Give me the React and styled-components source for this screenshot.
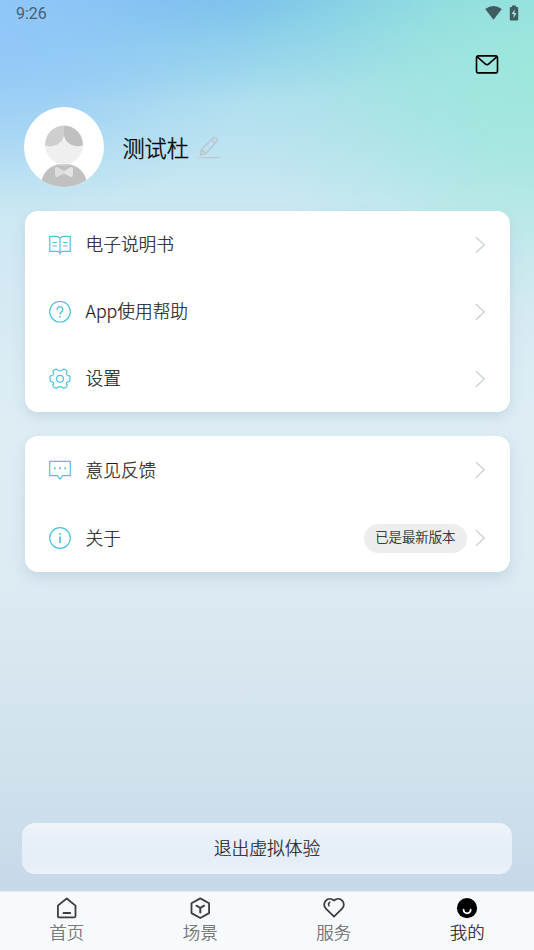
import React from 'react';
import styled, { createGlobalStyle } from 'styled-components';

const GlobalStyle = createGlobalStyle`
    * {
        box-sizing: border-box;
    }

    body {
        margin: 0;
        font-family: 'Noto Sans CJK SC', sans-serif;
        font-weight: 300;
        -webkit-text-stroke: 0.2px currentColor;
    }
`;

const Screen = styled.div`
    display: flex;
    flex-direction: column;
    height: 950px;
    overflow: hidden;
    background:
        radial-gradient(
            ellipse 270px 190px at 0 30px,
            rgba(146, 198, 250, 0.95),
            rgba(146, 198, 250, 0.6) 40%,
            rgba(146, 198, 250, 0.18) 75%,
            rgba(146, 198, 250, 0) 100%
        ),
        radial-gradient(
            ellipse 300px 250px at 540px 70px,
            rgba(156, 232, 218, 0.9),
            rgba(156, 232, 218, 0.6) 40%,
            rgba(156, 232, 218, 0.18) 75%,
            rgba(156, 232, 218, 0) 100%
        ),
        radial-gradient(
            ellipse 400px 120px at 150px -15px,
            rgba(122, 184, 240, 0.9),
            rgba(122, 190, 238, 0.35) 50%,
            rgba(122, 196, 236, 0) 100%
        ),
        linear-gradient(
            180deg,
            #83d2e4 0,
            #9bd9ea 45px,
            #aedfee 95px,
            #bde3f1 150px,
            #cbe8f2 205px,
            #d4e9f3 290px,
            #deedf4 420px,
            #dceaf2 590px,
            #d1e2ed 760px,
            #c7d9e9 890px
        );
`;

const StatusBar = styled.div`
    display: flex;
    justify-content: space-between;
    align-items: center;
    height: 27px;
    padding: 0 15px 0 16px;
    color: #44616f;
    font-family: Roboto, sans-serif;
    font-size: 16px;
    font-weight: 400;
    -webkit-text-stroke-width: 0;
`;

const StatusIcons = styled.div`
    display: flex;
    align-items: center;
    gap: 7px;
    margin: -2px 0 0;
`;

const TopActions = styled.div`
    display: flex;
    justify-content: flex-end;
    height: 80px;
    padding: 27px 35px 0 0;
`;

const Profile = styled.div`
    display: flex;
    align-items: center;
    height: 80px;
    margin-left: 24.4px;
`;

const Name = styled.h1`
    margin: 0 9px 0 18px;
    padding-bottom: 1px;
    color: #000;
    font-size: 22.2px;
    font-weight: 300;
    line-height: 30px;
    -webkit-text-stroke-width: 0.35px;
`;

const Card = styled.section`
    margin: 24px 24.5px 0;
    border-radius: 13px;
    background: #fff;
    box-shadow: 0 5px 12px rgba(165, 188, 212, 0.42);
`;

const Row = styled.div`
    display: flex;
    align-items: center;
    height: ${(props) => props.$height}px;
    padding: 0 25px 0 24px;
    color: #1c1c1c;
    font-size: 17.7px;

    & > svg:last-child {
        flex: none;
    }
`;

const Label = styled.span`
    flex: 1;
    padding: 0 0 3px 15px;
    line-height: 26px;
`;

const Version = styled.span`
    height: 29px;
    margin-right: 8px;
    padding: 0 11px;
    border-radius: 15px;
    background: #ededed;
    font-size: 13.4px;
    line-height: 25px;
`;

const LogoutButton = styled.button`
    height: 51px;
    margin: auto 22px 18px;
    padding: 0 0 3px;
    border: 0;
    border-radius: 13px;
    background: linear-gradient(180deg, #eef4fa 0, #e7eff7 35%, #e5edf6 75%, #edf2f9 100%);
    color: #1c1c1c;
    font: inherit;
    font-size: 17.8px;
`;

const TabBar = styled.nav`
    display: grid;
    grid-template-columns: repeat(4, 1fr);
    height: 58px;
    background: #f7fafd;
    box-shadow: 0 -1px 1px rgba(225, 235, 243, 0.9);
`;

const Tab = styled.div`
    display: flex;
    flex-direction: column;
    align-items: center;
    padding-top: 5px;
    color: ${(props) => (props.$active ? '#1c1c1c' : '#666')};
    font-size: 17.5px;
    line-height: 26px;
`;

const LineIcon = ({ color = '#4fc2dd', size = 22, width = 1.2, children }) => (
    <svg
        width={size}
        height={size}
        viewBox="0 0 22 22"
        fill="none"
        stroke={color}
        strokeWidth={width}
        strokeLinecap="round"
        strokeLinejoin="round"
    >
        {children}
    </svg>
);

const WifiIcon = () => (
    <svg width="17" height="14" viewBox="0 0 17 14" fill="#3f5d60">
        <path d="M.2 3Q8.5-2.8 16.8 3L8.5 13.7Z" />
    </svg>
);

const BatteryIcon = () => (
    <svg width="10" height="16" viewBox="0 0 10 16">
        <path d="M3 .4h4v1.5h1.2q1 0 1 1v11.6q0 1-1 1H1.8q-1 0-1-1V2.9q0-1 1-1H3Z" fill="#3f5d60" />
        <path d="M5.6 4.2 2.6 9h2v4.2L7.5 8h-2Z" fill="#a6dcdc" />
    </svg>
);

const MailIcon = () => (
    <svg width="24" height="20" viewBox="0 0 24 20" fill="none" stroke="#000" strokeWidth="1.6" strokeLinejoin="round">
        <rect x="1.5" y="1.9" width="21" height="17" rx="2" />
        <path d="M2 2.6 10.2 9.8q1.800 1.600 3.600 0l8.200-7.200" />
    </svg>
);

const Avatar = () => (
    <svg width="80" height="80" viewBox="0 0 80 80">
        <clipPath id="avatar">
            <circle cx="40" cy="40" r="40" />
        </clipPath>
        <circle cx="40" cy="40" r="40" fill="#fff" />
        <g clipPath="url(#avatar)">
            <circle cx="40" cy="38" r="19" fill="#efefef" />
            <path d="M40 18.5A19 19 0 0 0 21.2 38.5C30.5 41 39 36 40 28Z" fill="#cecece" />
            <path d="M40 18.5A19 19 0 0 1 58.8 38.5C49.5 41 41 36 40 28Z" fill="#c0c0c0" />
            <path d="M17 80C17 65 26.5 57 40 57S63 65 63 80Z" fill="#c0c0c0" />
            <path d="M33.5 58Q40 56 46.5 58Q40 60 33.5 58Z" fill="#d2d2d2" />
            <path d="M40 64 33 60Q31 59.5 31 62V68Q31 70.5 33 70L40 66.5Z" fill="#dedede" />
            <path d="M40 64 47 60Q49 59.5 49 62V68Q49 70.5 47 70L40 66.5Z" fill="#e4e4e4" />
        </g>
    </svg>
);

const EditIcon = () => (
    <svg width="23" height="23" viewBox="0 0 23 23" fill="none" stroke="#bac8cf" strokeWidth="1.6" strokeLinejoin="round">
        <path d="M2.5 19 3.5 13.5 15.5 1.5q.7-.7 1.4 0l2.200 2.100q.7.7 0 1.400L8 17.500ZM13.300 3.700l3.600 3.600M3.500 13.500l4.300 4" />
        <path d="M.5 21.600h22" strokeWidth="1.300" />
    </svg>
);

const Chevron = () => (
    <svg width="10" height="18" viewBox="0 0 10 18" fill="none" stroke="#c5cfd3" strokeWidth="1.2">
        <path d="m1 1.200 8.200 7.700L1 16.700" />
    </svg>
);

const BookIcon = () => (
    <LineIcon>
        <path d="M11 18V4.300Q10 2.300 7 2.300H.8v15h6.700q2.700 0 3.500 1.500.8-1.500 3.500-1.500h6.700v-15H15q-3 0-4 2M11 18v2.300" />
        <path d="M4 8.500h3.500M4 12h3.500M14.500 8.500H18M14.500 12H18" />
    </LineIcon>
);

const HelpIcon = () => (
    <LineIcon>
        <circle cx="11" cy="10.7" r="10.3" />
        <path d="M8.200 8.600a2.800 2.800 0 1 1 4.300 2.300q-1.500.8-1.500 2" strokeWidth="1.4" />
        <path d="M11 15.600v.1" strokeWidth="1.8" />
    </LineIcon>
);

const SettingsIcon = () => (
    <LineIcon>
        <circle cx="11" cy="10.7" r="3.4" />
        <path d="M8.7 2.2Q11 3.5 13.3 2.2Q14.3.7 16 1.5L17.5 2.5Q18.4 3.2 17.7 4.8C17.1 6.3 17.8 7.5 19.5 7.7Q20.8 7.8 21 9.2V12.2Q20.8 13.6 19.5 13.7C17.8 13.9 17.1 15.1 17.7 16.6Q18.4 18.2 17.5 18.9L16 19.9Q14.3 20.7 13.3 19.2Q11 17.9 8.7 19.2Q7.7 20.7 6 19.9L4.5 18.9Q3.6 18.2 4.3 16.6C4.9 15.1 4.2 13.9 2.5 13.7Q1.2 13.6 1 12.2V9.2Q1.2 7.8 2.5 7.7C4.2 7.5 4.9 6.3 4.3 4.8Q3.6 3.2 4.5 2.5L6 1.5Q7.7.7 8.7 2.2Z" />
    </LineIcon>
);

const FeedbackIcon = () => (
    <LineIcon>
        <path d="M.7 2.400h20.600v14.200h-7.600L11 20.200l-2.700-3.600H.7Z" />
        <path d="M5.800 9.200v.1M11 9.200v.1M16.200 9.200v.1" strokeWidth="2" />
    </LineIcon>
);

const AboutIcon = () => (
    <LineIcon>
        <circle cx="11" cy="11" r="10.3" />
        <path d="M11 9.500v6.600" strokeWidth="1.7" strokeLinecap="butt" />
        <path d="M11 6.900v.1" strokeWidth="1.8" />
    </LineIcon>
);

const HomeIcon = () => (
    <LineIcon color="#3b3e40" width={1.8}>
        <path d="M1.900 8.600 10.700 1.500l8.800 7.100v10.300q0 1.500-1.500 1.500H3.400q-1.500 0-1.500-1.500ZM7.500 16h6.700" />
    </LineIcon>
);

const SceneIcon = () => (
    <LineIcon color="#3b3e40" width={1.8}>
        <path d="m11.300 1.400 8.800 4.900v9.800L11.300 21l-8.800-4.900V6.300Z" />
        <path d="m7.500 8.700 3.800 2.300 3.800-2.300M11.300 11v4.400" strokeWidth="2" />
    </LineIcon>
);

const HeartIcon = () => (
    <LineIcon color="#3b3e40" width={1.8}>
        <path d="M11 19.600 2.900 11.700C.7 9.500.6 6 2.600 3.800c2.200-2.300 5.800-2.500 8.400-.3 2.600-2.200 6.200-2 8.400.3C21.400 6 21.300 9.500 19.100 11.700Z" />
        <path d="M6.900 5.200Q4.700 6.500 6 8.900" strokeWidth="1.5" />
    </LineIcon>
);

const FaceIcon = () => (
    <LineIcon color="#fff" width={1.8}>
        <circle cx="11" cy="11.2" r="10.1" fill="#000" stroke="none" />
        <path d="M7.600 12.700v.6a3.500 3 0 0 0 7 0v-.6" />
    </LineIcon>
);

const guideItems = [
    { label: '电子说明书', Icon: BookIcon },
    { label: 'App使用帮助', Icon: HelpIcon },
    { label: '设置', Icon: SettingsIcon },
];

const aboutItems = [
    { label: '意见反馈', Icon: FeedbackIcon },
    { label: '关于', Icon: AboutIcon, version: '已是最新版本' },
];

const tabs = [
    { label: '首页', Icon: HomeIcon },
    { label: '场景', Icon: SceneIcon },
    { label: '服务', Icon: HeartIcon },
    { label: '我的', Icon: FaceIcon, active: true },
];

const MenuCard = ({ items, rowHeight }) => (
    <Card>
        {items.map(({ label, Icon, version }) => (
            <Row key={label} $height={rowHeight}>
                <Icon />
                <Label>{label}</Label>
                {version && <Version>{version}</Version>}
                <Chevron />
            </Row>
        ))}
    </Card>
);

const App = () => {
    return (
        <>
            <GlobalStyle />
            <Screen>
                <StatusBar>
                    <span>9:26</span>
                    <StatusIcons>
                        <WifiIcon />
                        <BatteryIcon />
                    </StatusIcons>
                </StatusBar>
                <TopActions>
                    <MailIcon />
                </TopActions>
                <Profile>
                    <Avatar />
                    <Name>测试杜</Name>
                    <EditIcon />
                </Profile>
                <MenuCard items={guideItems} rowHeight={67} />
                <MenuCard items={aboutItems} rowHeight={68} />
                <LogoutButton>退出虚拟体验</LogoutButton>
                <TabBar>
                    {tabs.map(({ label, Icon, active }) => (
                        <Tab key={label} $active={active}>
                            <Icon />
                            {label}
                        </Tab>
                    ))}
                </TabBar>
            </Screen>
        </>
    );
};

export default App;
